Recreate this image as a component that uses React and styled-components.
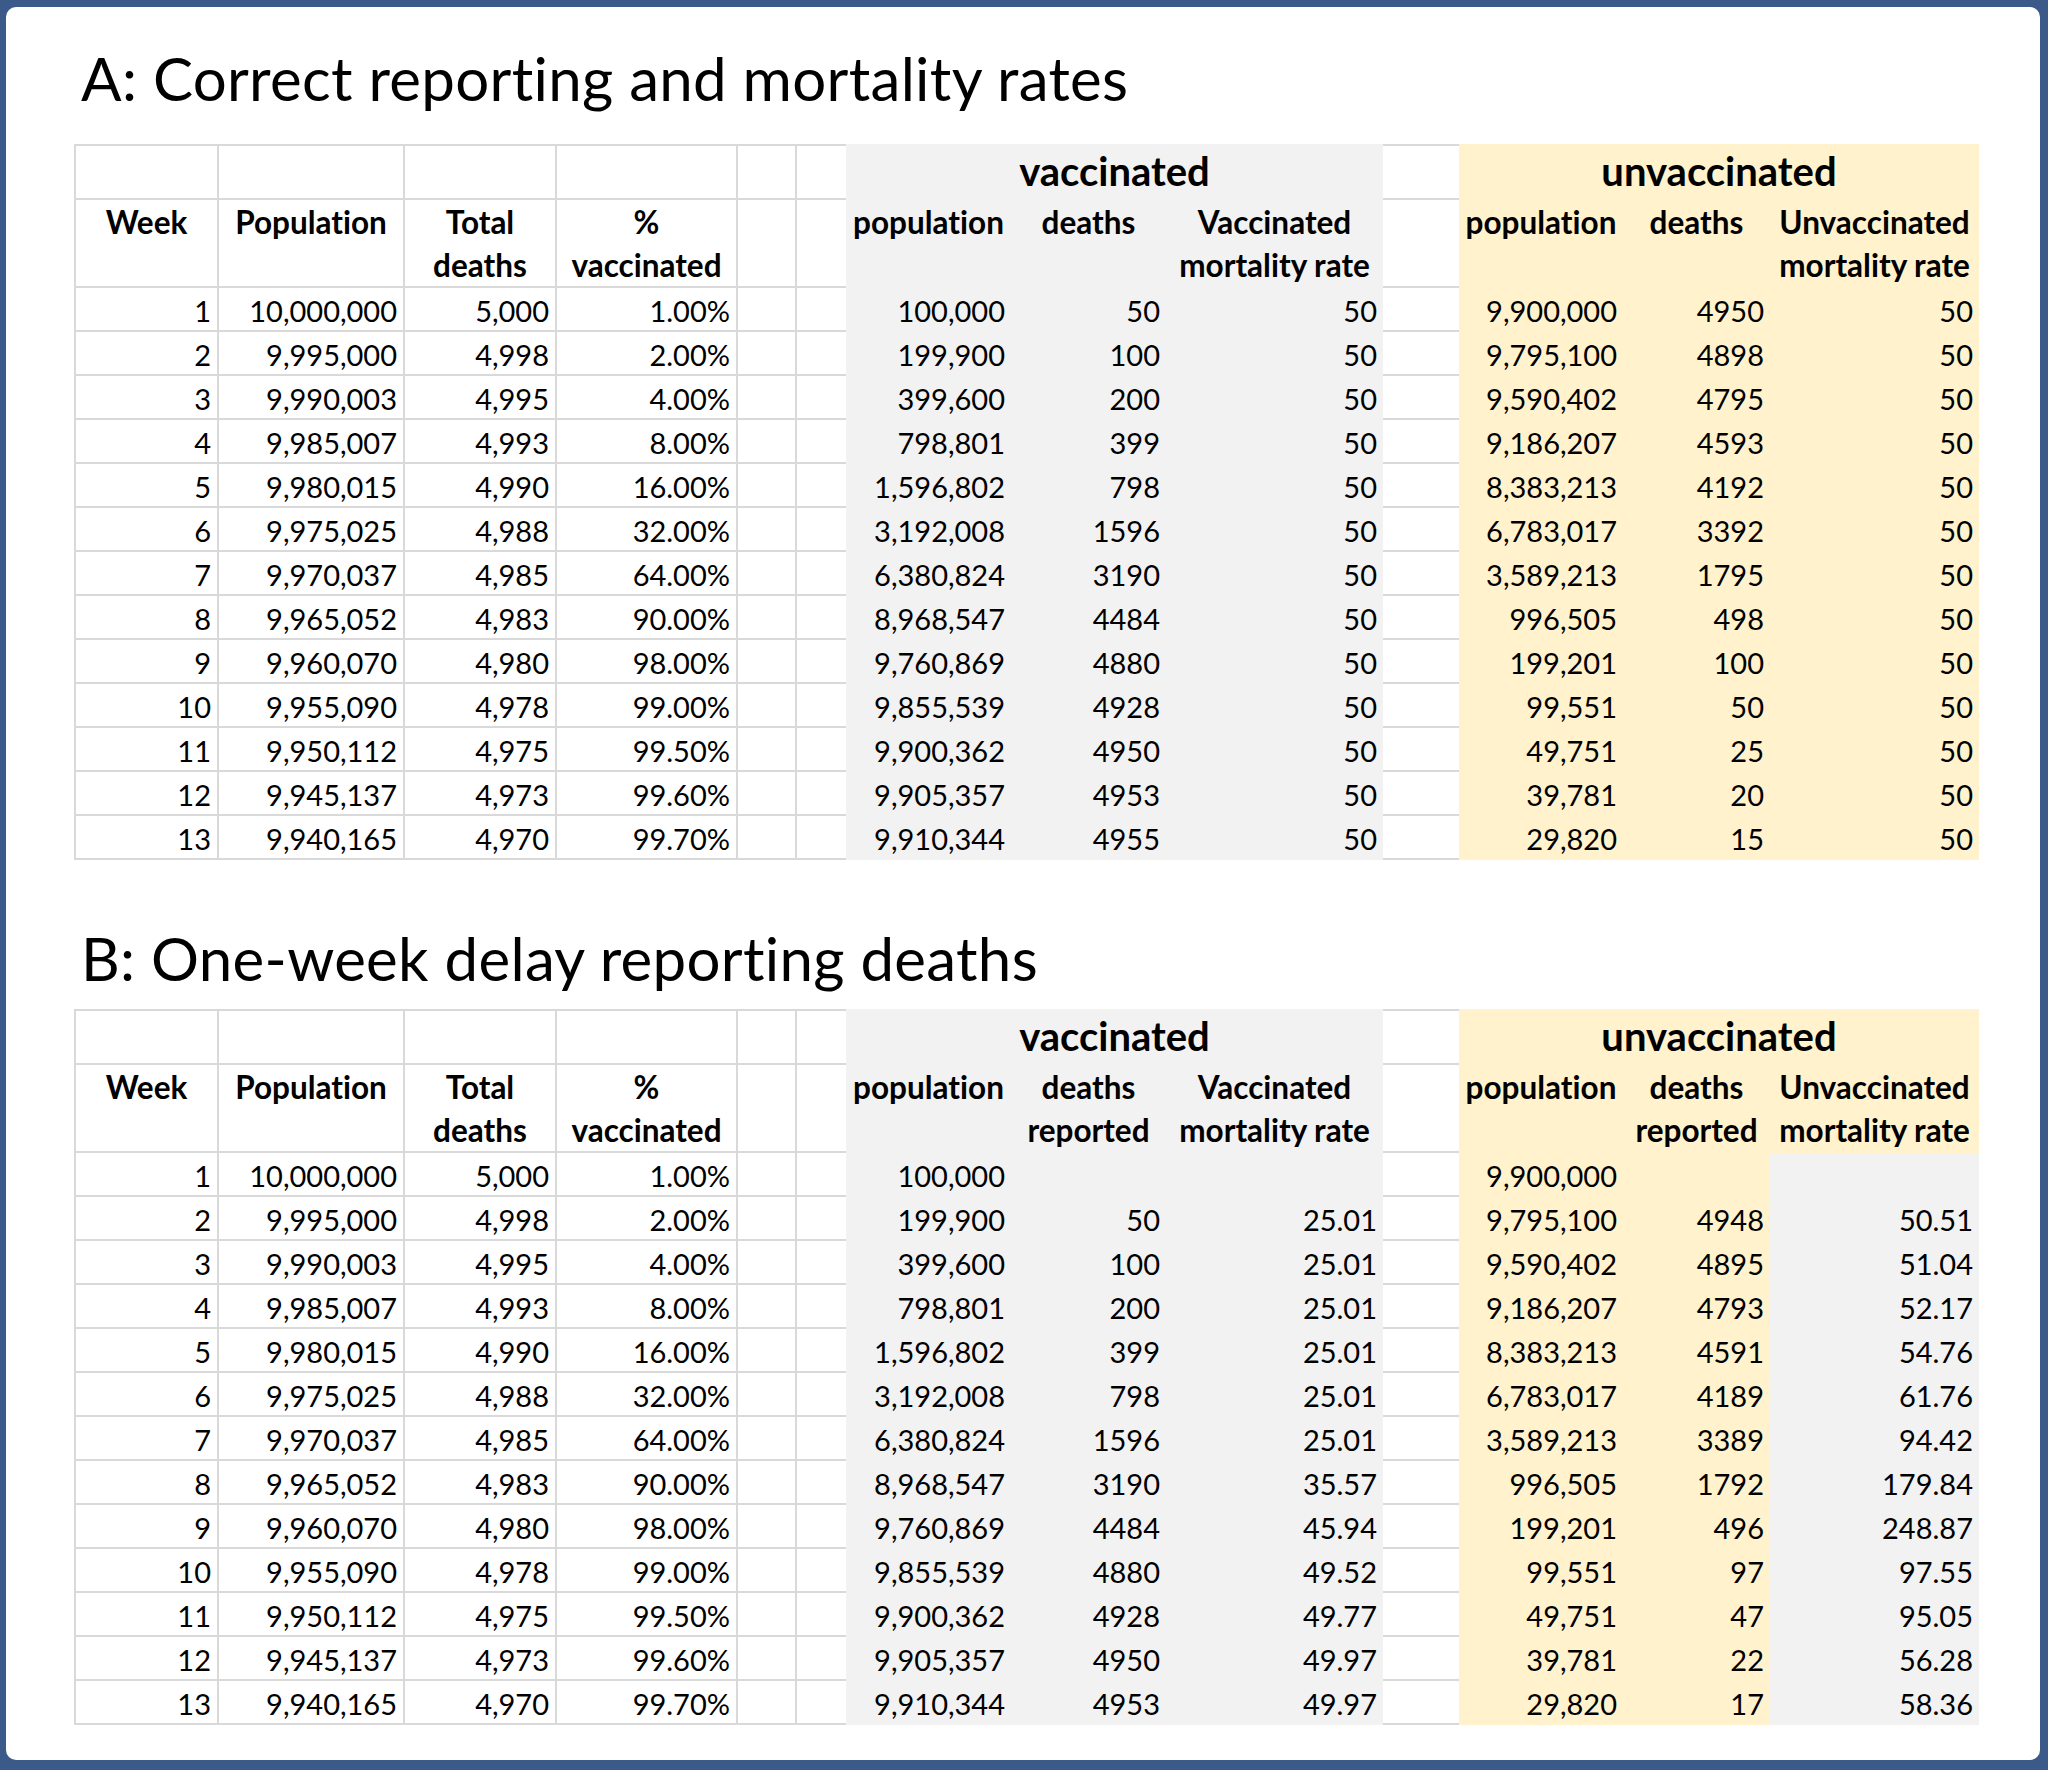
import { createGlobalStyle } from "styled-components";
import styled from "styled-components";

const GlobalStyle = createGlobalStyle`
  body {
    margin: 0;
    background: #3b5a8a;
    font-family: Lato, "Open Sans", sans-serif;
    font-variant-ligatures: none;
    color: #000;
  }
`;

const fills = {
  white: "#ffffff",
  gray: "#f2f2f2",
  yellow: "#fff2cc",
};

const line = "2px solid #d9d9d9";

const Frame = styled.div`
  box-sizing: border-box;
  width: 2048px;
  height: 1770px;
  padding: 7px 8px 10px 6px;
  background: #3b5a8a;
`;

const Panel = styled.div`
  box-sizing: border-box;
  height: 100%;
  background: #fff;
  border-radius: 10px;
  padding: 35px 0 0 68px;
  display: flex;
  flex-direction: column;
`;

const Section = styled.section`
  display: flex;
  flex-direction: column;
  margin-top: ${(p) => p.$mt || 0}px;
`;

const Title = styled.h2`
  margin: 0 0 ${(p) => p.$mb}px 7px;
  font-size: 60px;
  font-weight: 400;
  line-height: 72px;
  letter-spacing: ${(p) => p.$ls || 0.3}px;
  white-space: nowrap;
`;

const Sheet = styled.div`
  display: grid;
  grid-template-columns: 145px 186px 152px 181px 59px 49px 165px 155px 217px 76px 164px 147px 209px;
  grid-template-rows: 56px 88px repeat(13, 44px);
  width: max-content;
`;

const Cell = styled.div`
  box-sizing: border-box;
  background: ${(p) => fills[p.$fill]};
  border-right: ${(p) => (p.$fill === "white" && !p.$open ? line : "none")};
  border-bottom: ${(p) => (p.$fill === "white" ? line : "none")};
  border-top: ${(p) => (p.$fill === "white" && p.$top ? line : "none")};
  border-left: ${(p) => (p.$first ? line : "none")};
  padding: 1px 6px 0 0;
  text-align: right;
  font-size: 29px;
  line-height: 44px;
  white-space: nowrap;
`;

const HeadCell = styled(Cell)`
  padding: 1px 0 0;
  text-align: center;
  font-size: 31.5px;
  font-weight: 700;
  line-height: 43px;
`;

const GroupCell = styled(Cell)`
  grid-column: span 3;
  padding: 0;
  text-align: center;
  font-size: 40px;
  font-weight: 700;
  line-height: 54px;
`;

const leftHeads = [["Week"], ["Population"], ["Total", "deaths"], ["%", "vaccinated"]];

const leftRows = [
  ["1", "10,000,000", "5,000", "1.00%"],
  ["2", "9,995,000", "4,998", "2.00%"],
  ["3", "9,990,003", "4,995", "4.00%"],
  ["4", "9,985,007", "4,993", "8.00%"],
  ["5", "9,980,015", "4,990", "16.00%"],
  ["6", "9,975,025", "4,988", "32.00%"],
  ["7", "9,970,037", "4,985", "64.00%"],
  ["8", "9,965,052", "4,983", "90.00%"],
  ["9", "9,960,070", "4,980", "98.00%"],
  ["10", "9,955,090", "4,978", "99.00%"],
  ["11", "9,950,112", "4,975", "99.50%"],
  ["12", "9,945,137", "4,973", "99.60%"],
  ["13", "9,940,165", "4,970", "99.70%"],
];

const tableA = {
  title: "A: Correct reporting and mortality rates",
  vacHeads: [["population"], ["deaths"], ["Vaccinated", "mortality rate"]],
  unvacHeads: [["population"], ["deaths"], ["Unvaccinated", "mortality rate"]],
  lastFill: "yellow",
  rows: [
    ["100,000", "50", "50", "9,900,000", "4950", "50"],
    ["199,900", "100", "50", "9,795,100", "4898", "50"],
    ["399,600", "200", "50", "9,590,402", "4795", "50"],
    ["798,801", "399", "50", "9,186,207", "4593", "50"],
    ["1,596,802", "798", "50", "8,383,213", "4192", "50"],
    ["3,192,008", "1596", "50", "6,783,017", "3392", "50"],
    ["6,380,824", "3190", "50", "3,589,213", "1795", "50"],
    ["8,968,547", "4484", "50", "996,505", "498", "50"],
    ["9,760,869", "4880", "50", "199,201", "100", "50"],
    ["9,855,539", "4928", "50", "99,551", "50", "50"],
    ["9,900,362", "4950", "50", "49,751", "25", "50"],
    ["9,905,357", "4953", "50", "39,781", "20", "50"],
    ["9,910,344", "4955", "50", "29,820", "15", "50"],
  ],
};

const tableB = {
  title: "B: One-week delay reporting deaths",
  vacHeads: [["population"], ["deaths", "reported"], ["Vaccinated", "mortality rate"]],
  unvacHeads: [["population"], ["deaths", "reported"], ["Unvaccinated", "mortality rate"]],
  lastFill: "gray",
  rows: [
    ["100,000", "", "", "9,900,000", "", ""],
    ["199,900", "50", "25.01", "9,795,100", "4948", "50.51"],
    ["399,600", "100", "25.01", "9,590,402", "4895", "51.04"],
    ["798,801", "200", "25.01", "9,186,207", "4793", "52.17"],
    ["1,596,802", "399", "25.01", "8,383,213", "4591", "54.76"],
    ["3,192,008", "798", "25.01", "6,783,017", "4189", "61.76"],
    ["6,380,824", "1596", "25.01", "3,589,213", "3389", "94.42"],
    ["8,968,547", "3190", "35.57", "996,505", "1792", "179.84"],
    ["9,760,869", "4484", "45.94", "199,201", "496", "248.87"],
    ["9,855,539", "4880", "49.52", "99,551", "97", "97.55"],
    ["9,900,362", "4928", "49.77", "49,751", "47", "95.05"],
    ["9,905,357", "4950", "49.97", "39,781", "22", "56.28"],
    ["9,910,344", "4953", "49.97", "29,820", "17", "58.36"],
  ],
};

const Lines = ({ lines }) =>
  lines.map((t, i) => (
    <span key={i}>
      {i > 0 && <br />}
      {t}
    </span>
  ));

const DataSheet = ({ table }) => (
  <Sheet>
    {/* group header row */}
    {[0, 1, 2, 3, 4, 5].map((i) => (
      <Cell key={"g" + i} $fill="white" $top $first={i === 0} $open={i === 5} />
    ))}
    <GroupCell $fill="gray">vaccinated</GroupCell>
    <Cell $fill="white" $top $open />
    <GroupCell $fill="yellow">unvaccinated</GroupCell>

    {/* column header row */}
    {leftHeads.map((h, i) => (
      <HeadCell key={"h" + i} $fill="white" $first={i === 0}>
        <Lines lines={h} />
      </HeadCell>
    ))}
    <Cell $fill="white" />
    <Cell $fill="white" $open />
    {table.vacHeads.map((h, i) => (
      <HeadCell key={"v" + i} $fill="gray">
        <Lines lines={h} />
      </HeadCell>
    ))}
    <Cell $fill="white" $open />
    {table.unvacHeads.map((h, i) => (
      <HeadCell key={"u" + i} $fill="yellow">
        <Lines lines={h} />
      </HeadCell>
    ))}

    {/* data rows */}
    {table.rows.map((r, ri) => [
      ...leftRows[ri].map((v, i) => (
        <Cell key={`${ri}l${i}`} $fill="white" $first={i === 0}>
          {v}
        </Cell>
      )),
      <Cell key={`${ri}e1`} $fill="white" />,
      <Cell key={`${ri}e2`} $fill="white" $open />,
      ...r.slice(0, 3).map((v, i) => (
        <Cell key={`${ri}v${i}`} $fill="gray">
          {v}
        </Cell>
      )),
      <Cell key={`${ri}e3`} $fill="white" $open />,
      <Cell key={`${ri}u0`} $fill="yellow">
        {r[3]}
      </Cell>,
      <Cell key={`${ri}u1`} $fill="yellow">
        {r[4]}
      </Cell>,
      <Cell key={`${ri}u2`} $fill={table.lastFill}>
        {r[5]}
      </Cell>,
    ])}
  </Sheet>
);

const App = () => (
  <>
    <GlobalStyle />
    <Frame>
      <Panel>
        <Section>
          <Title $mb={30}>{tableA.title}</Title>
          <DataSheet table={tableA} />
        </Section>
        <Section $mt={62}>
          <Title $mb={15} $ls={0}>
            {tableB.title}
          </Title>
          <DataSheet table={tableB} />
        </Section>
      </Panel>
    </Frame>
  </>
);

export default App;
